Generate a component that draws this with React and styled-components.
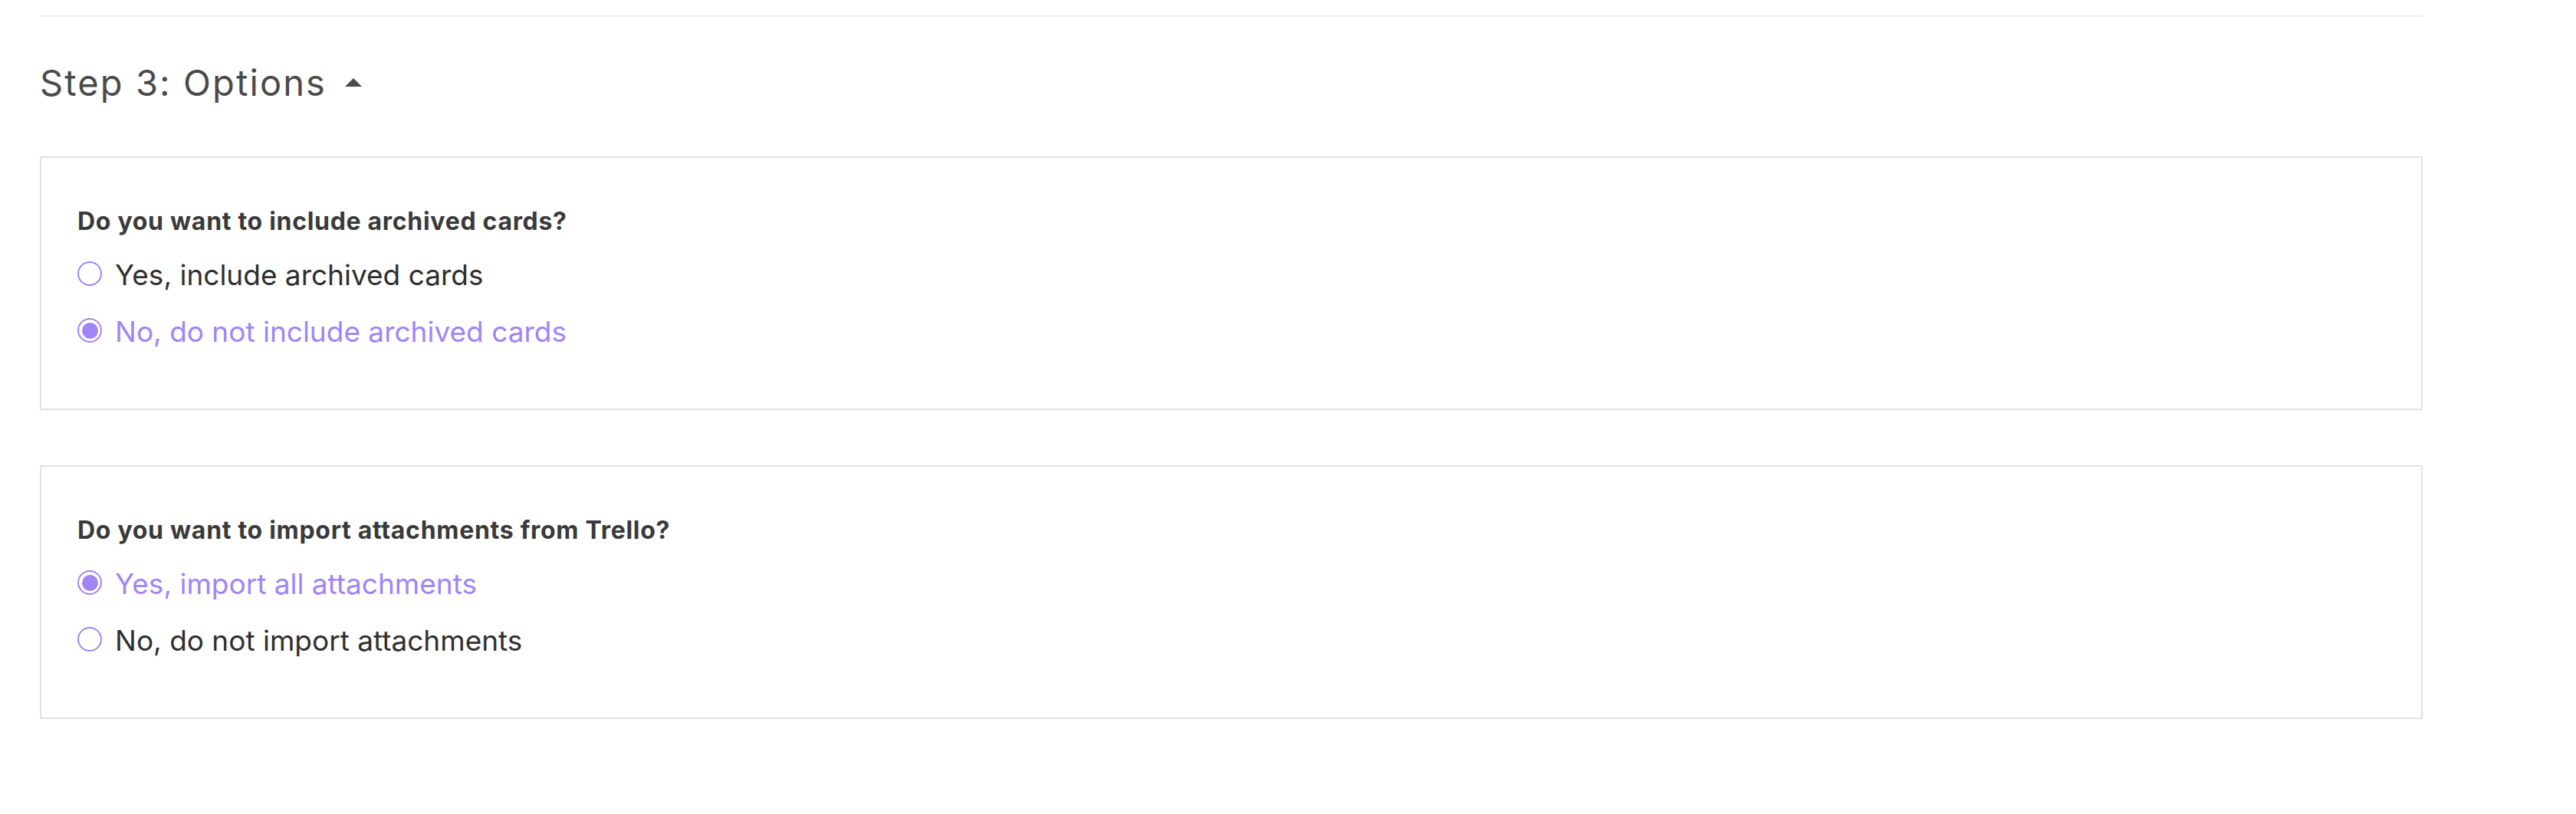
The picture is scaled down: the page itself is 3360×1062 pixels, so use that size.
import React, { useState } from "react";
import styled, { createGlobalStyle } from "styled-components";

const GlobalStyle = createGlobalStyle`
  html, body {
    margin: 0;
    padding: 0;
    background: #ffffff;
  }
  body {
    font-family: "Inter", "Noto Sans", sans-serif;
    -webkit-font-smoothing: antialiased;
  }
`;

const PURPLE = "#a184f6";

const Page = styled.div`
  width: 3108px;
  padding: 20px 0 0 52px;
`;

const Divider = styled.div`
  height: 2px;
  background: #ececec;
`;

const StepHeader = styled.button`
  display: flex;
  align-items: center;
  gap: 24px;
  margin-top: 58px;
  padding: 0;
  border: 0;
  background: none;
  cursor: pointer;
  height: 56px;
`;

const StepTitle = styled.h2`
  margin: 0;
  font-family: "Inter", "Noto Sans", sans-serif;
  font-size: 47px;
  line-height: 56px;
  font-weight: 400;
  letter-spacing: 2.1px;
  color: #4a4a4a;
`;

const Caret = styled.svg`
  width: 22px;
  height: 11px;
  margin-top: -2px;
  fill: #4a4a4a;
`;

const OptionCard = styled.fieldset`
  box-sizing: border-box;
  margin: ${(p) => (p.$first ? "68px" : "72px")} 0 0 0;
  padding: 63px 0 65px 47px;
  border: 2px solid #e2e2e2;
  min-width: 0;
`;

const Question = styled.legend`
  float: left;
  width: 100%;
  padding: 0;
  margin: 0 0 11px 0;
  font-size: 32px;
  line-height: 40px;
  font-weight: 700;
  letter-spacing: 0.7px;
  color: #3a3a3a;
`;

const Choices = styled.div`
  clear: both;
  display: flex;
  flex-direction: column;
`;

const Choice = styled.label`
  display: flex;
  align-items: center;
  gap: 17px;
  height: 74px;
  cursor: pointer;
`;

const HiddenInput = styled.input`
  position: absolute;
  opacity: 0;
  width: 0;
  height: 0;
  margin: 0;
`;

const RadioMark = styled.span`
  box-sizing: border-box;
  position: relative;
  flex: none;
  width: 32px;
  height: 32px;
  border-radius: 50%;
  border: 2.5px solid ${PURPLE};
  background: #fff;

  &::after {
    content: "";
    position: absolute;
    inset: 3.5px;
    border-radius: 50%;
    background: ${PURPLE};
    opacity: ${(p) => (p.$checked ? 1 : 0)};
  }
`;

const ChoiceText = styled.span`
  padding-top: 3px;
  font-size: 37px;
  line-height: 44px;
  font-weight: 400;
  color: ${(p) => (p.$checked ? PURPLE : "#2f2f2f")};
`;

const questions = [
  {
    id: "archived",
    title: "Do you want to include archived cards?",
    options: [
      { value: "yes", label: "Yes, include archived cards" },
      { value: "no", label: "No, do not include archived cards" },
    ],
    initial: "no",
  },
  {
    id: "attachments",
    title: "Do you want to import attachments from Trello?",
    options: [
      { value: "yes", label: "Yes, import all attachments" },
      { value: "no", label: "No, do not import attachments" },
    ],
    initial: "yes",
  },
];

function QuestionCard({ q, first }) {
  const [value, setValue] = useState(q.initial);
  return (
    <OptionCard $first={first}>
      <Question>{q.title}</Question>
      <Choices>
        {q.options.map((o) => {
          const checked = value === o.value;
          return (
            <Choice key={o.value}>
              <HiddenInput
                type="radio"
                name={q.id}
                value={o.value}
                checked={checked}
                onChange={() => setValue(o.value)}
              />
              <RadioMark $checked={checked} />
              <ChoiceText $checked={checked}>{o.label}</ChoiceText>
            </Choice>
          );
        })}
      </Choices>
    </OptionCard>
  );
}

export default function App() {
  const [open, setOpen] = useState(true);
  return (
    <>
      <GlobalStyle />
      <Page>
        <Divider />
        <StepHeader onClick={() => setOpen(!open)}>
          <StepTitle>Step 3: Options</StepTitle>
          <Caret viewBox="0 0 22 11" aria-hidden="true">
            {open ? <path d="M11 0 L22 11 L0 11 Z" /> : <path d="M0 0 L22 0 L11 11 Z" />}
          </Caret>
        </StepHeader>
        {open &&
          questions.map((q, i) => <QuestionCard key={q.id} q={q} first={i === 0} />)}
      </Page>
    </>
  );
}
